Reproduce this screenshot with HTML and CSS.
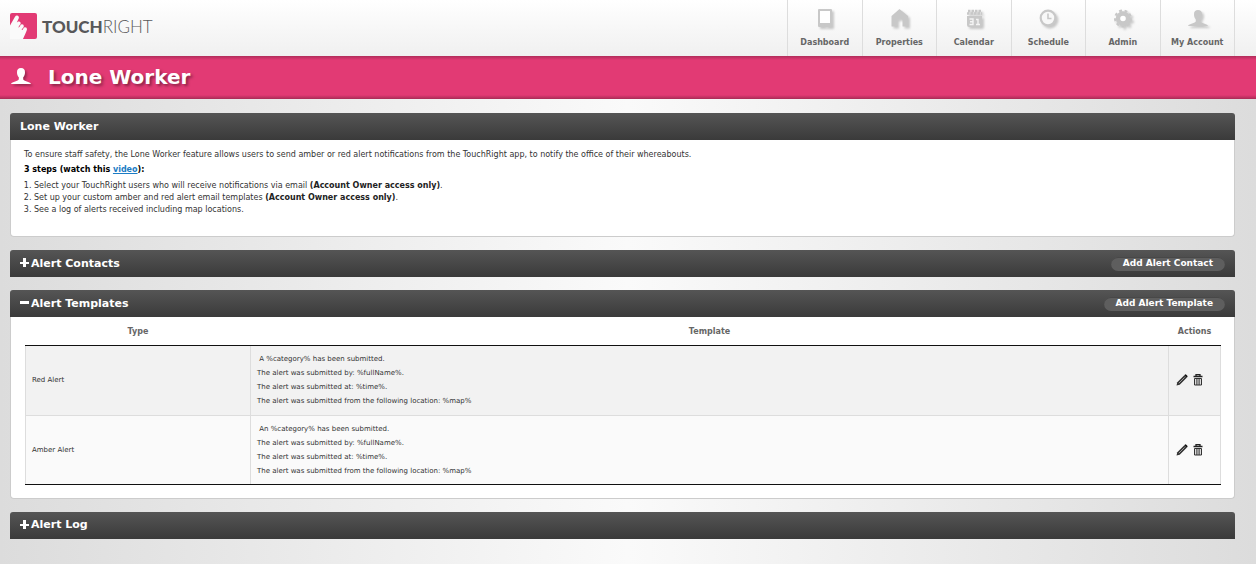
FILE: index.html
```html
<!DOCTYPE html>
<html lang="en">

<head>
    <meta charset="utf-8">
    <title>Lone Worker - TouchRight</title>
    <meta name="viewport" content="width=device-width, initial-scale=1">
    <link rel="stylesheet" href="styles.css">
</head>

<body>
    <!-- shared icons -->
    <svg class="sprite" aria-hidden="true">
        <symbol id="person" viewBox="0 0 20 17">
            <path d="M10 0C7.200 0 5.900 1.800 6 4.400C6 6.500 6.800 8.300 7.800 9.300V11.300C7.300 13.400 1.200 13.400 0 16H20C18.800 13.400 12.700 13.400 12.200 11.300V9.300C13.200 8.300 14 6.500 14 4.400C14.100 1.800 12.800 0 10 0Z" />
        </symbol>
        <symbol id="plus" viewBox="0 0 9 11">
            <path d="M3 0H6V4H9V6H6V9H3V6H0V4H3Z" />
        </symbol>
        <symbol id="pencil" viewBox="0 0 12 12">
            <path d="M0.500 11.500L1.300 8.300L8.300 1.300L10.700 3.700L3.700 10.700Z" fill="#333" />
            <path d="M8.800 0.800Q9.500 0 10.300 0.700L11.300 1.700Q12 2.500 11.200 3.200L10.700 3.700L8.300 1.300Z" fill="#111" />
            <path d="M2.800 9.200L8.600 3.400" stroke="#aaa" stroke-width="0.900" />
        </symbol>
        <symbol id="trash" viewBox="0 0 10 12">
            <path d="M3 2V0.700H7V2M0.500 2.500H9.500" fill="none" stroke="#222" stroke-width="1.300" />
            <path d="M1.500 4.500H8.500V11H1.500ZM3.900 4.500V11M6.100 4.500V11" fill="#ddd" stroke="#333" stroke-width="1" />
        </symbol>
    </svg>

    <header class="top">
        <a href="#" class="logo">
            <svg class="logo-mark" viewBox="0 0 27 26" aria-hidden="true">
                <rect width="27" height="26" rx="2" fill="#e23a74" />
                <path d="M0 12.500L5 3.800Q6.200 2 8 2.800Q9.500 3.700 8.700 5.600L6.800 9.600L8.300 8.500Q10.500 8 10.700 10L10.400 12L11.700 11.200Q13.800 11 13.800 13L13.500 15L14.700 14.300Q17 14 17 16.300Q17 17.300 13 26H0Z" fill="#fafafa" />
                <path d="M10.400 11.500L8.800 14.300M13.500 14.500L12 17" stroke="#e23a74" stroke-width="0.900" />
            </svg>
            <span class="logo-text"><b>TOUCH</b>RIGHT</span>
        </a>
        <nav class="menu">
            <a href="#">
                <svg viewBox="-1 0 20 20"><path fill-rule="evenodd" d="M3 0H15Q16 0 16 1V17Q16 18 15 18H3Q2 18 2 17V1Q2 0 3 0ZM4 2V14H14V2ZM8 15.500V16.500H10V15.500Z" /><path d="M4 2H14V14H4Z" fill="#fff" /></svg>
                Dashboard
            </a>
            <a href="#">
                <svg viewBox="-1 0 20 20"><path d="M9.500 0L18 7V17.500H12.500V11Q9.500 8 7 11V17.500H1.500V7Z" /></svg>
                Properties
            </a>
            <a href="#">
                <svg viewBox="-1 0 20 20">
                    <path d="M2 7H17V16Q17 18 15 18H4Q2 18 2 16Z" />
                    <path d="M2 4.500H17M3 2H16" stroke="#c8c8c8" stroke-width="2.400" stroke-dasharray="2.500 1" />
                    <path d="M4.500 10H8V15.500H4.500M5 12.700H8M11 10.500H13V15.500M11 15.500H15" stroke="#f4f4f4" stroke-width="1.400" fill="none" />
                </svg>
                Calendar
            </a>
            <a href="#">
                <svg viewBox="-1 0 20 20">
                    <circle cx="9" cy="9" r="7.300" fill="#f8f8f8" stroke="#c8c8c8" stroke-width="2.200" />
                    <path d="M9 4.500V9.500H12.500" fill="none" stroke="#c8c8c8" stroke-width="1.600" />
                </svg>
                Schedule
            </a>
            <a href="#">
                <svg viewBox="-1 0 20 20">
                    <circle cx="9" cy="9.500" r="5" fill="#fff" stroke="#c8c8c8" stroke-width="4.400" />
                    <circle cx="9" cy="9.500" r="7.900" fill="none" stroke="#c8c8c8" stroke-width="2.200" stroke-dasharray="2.910 2.600" />
                </svg>
                Admin
            </a>
            <a href="#">
                <svg viewBox="-1 0 20 20"><use href="#person" width="20" height="19" /></svg>
                My Account
            </a>
        </nav>
    </header>

    <div class="banner">
        <svg class="banner-icon" aria-hidden="true"><use href="#person" /></svg>
        <h1>Lone Worker</h1>
    </div>

    <main class="content">
        <section class="panel">
            <div class="panel-head">
                <h2>Lone Worker</h2>
            </div>
            <div class="panel-body intro">
                <p>To ensure staff safety, the Lone Worker feature allows users to send amber or red alert notifications from the TouchRight app, to notify the office of their whereabouts.</p>
                <h3>3 steps (watch this <a href="#">video</a>):</h3>
                <ol>
                    <li>Select your TouchRight users who will receive notifications via email <b>(Account Owner access only)</b>.</li>
                    <li>Set up your custom amber and red alert email templates <b>(Account Owner access only)</b>.</li>
                    <li>See a log of alerts received including map locations.</li>
                </ol>
            </div>
        </section>

        <section class="panel">
            <div class="panel-head">
                <svg class="toggle" aria-hidden="true"><use href="#plus" /></svg>
                <h2>Alert Contacts</h2>
                <button type="button" class="add">Add Alert Contact</button>
            </div>
        </section>

        <section class="panel">
            <div class="panel-head">
                <svg class="toggle" viewBox="0 0 9 11" aria-hidden="true"><path d="M0 3H9V6H0Z" /></svg>
                <h2>Alert Templates</h2>
                <button type="button" class="add">Add Alert Template</button>
            </div>
            <div class="panel-body">
                <table class="templates">
                    <thead>
                        <tr>
                            <th class="col-type">Type</th>
                            <th>Template</th>
                            <th class="col-actions">Actions</th>
                        </tr>
                    </thead>
                    <tbody>
                        <tr>
                            <td>Red Alert</td>
                            <td>
                                <p>&nbsp;A %category% has been submitted.</p>
                                <p>The alert was submitted by: %fullName%.</p>
                                <p>The alert was submitted at: %time%.</p>
                                <p>The alert was submitted from the following location: %map%</p>
                            </td>
                            <td>
                                <div class="actions">
                                    <button type="button" aria-label="Edit"><svg width="12" height="12"><use href="#pencil" /></svg></button>
                                    <button type="button" aria-label="Delete"><svg width="10" height="12"><use href="#trash" /></svg></button>
                                </div>
                            </td>
                        </tr>
                        <tr>
                            <td>Amber Alert</td>
                            <td>
                                <p>&nbsp;An %category% has been submitted.</p>
                                <p>The alert was submitted by: %fullName%.</p>
                                <p>The alert was submitted at: %time%.</p>
                                <p>The alert was submitted from the following location: %map%</p>
                            </td>
                            <td>
                                <div class="actions">
                                    <button type="button" aria-label="Edit"><svg width="12" height="12"><use href="#pencil" /></svg></button>
                                    <button type="button" aria-label="Delete"><svg width="10" height="12"><use href="#trash" /></svg></button>
                                </div>
                            </td>
                        </tr>
                    </tbody>
                </table>
            </div>
        </section>

        <section class="panel">
            <div class="panel-head">
                <svg class="toggle" aria-hidden="true"><use href="#plus" /></svg>
                <h2>Alert Log</h2>
            </div>
        </section>
    </main>
</body>

</html>
```

FILE: styles.css
```css
* {
    box-sizing: border-box;
}

html {
    min-height: 100%;
    background: linear-gradient(90deg, #dcdcdc, #fafafa 50%, #dcdcdc);
}

body {
    margin: 0;
    font-family: "DejaVu Sans", Verdana, sans-serif;
    font-size: 8px;
    color: #333;
}

h1, h2, h3, p, ol {
    margin: 0;
}

.sprite {
    display: none;
}

/* top bar */
.top {
    display: flex;
    justify-content: space-between;
    height: 56px;
    padding: 0 21px 0 10px;
    background: linear-gradient(#fff, #f0f0f0);
}

.logo {
    display: flex;
    align-items: center;
    gap: 5px;
    padding-bottom: 4px;
    color: #58585a;
    text-decoration: none;
}

.logo-mark {
    width: 27px;
    height: 26px;
}

.logo-text {
    font-family: Lato, sans-serif;
    font-size: 17px;
    font-weight: 300;
}

.logo-text b {
    font-weight: 900;
}

.menu {
    display: grid;
    grid-template-columns: repeat(6, 1fr);
    width: 448px;
    border-right: 1px solid #ddd;
}

.menu a {
    display: flex;
    flex-direction: column;
    align-items: center;
    gap: 7px;
    padding-top: 9px;
    border-left: 1px solid #ddd;
    font-size: 8px;
    font-weight: bold;
    line-height: 14px;
    color: #666;
    text-decoration: none;
}

.menu svg {
    width: 20px;
    height: 20px;
    fill: #c8c8c8;
    overflow: visible;
    filter: drop-shadow(2px 2px 1px rgba(0, 0, 0, .2));
}

/* page title */
.banner {
    display: flex;
    align-items: center;
    gap: 17px;
    height: 43px;
    padding: 0 11px 2px;
    background: linear-gradient(#b02d5a, #e23a74 4px, #e23a74 39px, #a82b56);
    color: #fff;
}

.banner-icon {
    width: 20px;
    height: 17px;
    fill: #fff;
    filter: drop-shadow(2px 2px 1px rgba(0, 0, 0, .3));
}

.banner h1 {
    font-size: 20px;
    line-height: 24px;
    text-shadow: 2px 2px 3px rgba(0, 0, 0, .4);
}

/* panels */
.content {
    display: flex;
    flex-direction: column;
    gap: 13px;
    padding: 14px 21px 25px 10px;
}

.panel-head {
    display: flex;
    align-items: center;
    gap: 2px;
    height: 27px;
    padding: 0 10px;
    border-radius: 3px 3px 0 0;
    background: linear-gradient(#555, #3a3a3a);
    color: #fff;
}

.panel-head h2 {
    font-size: 11px;
    line-height: 14px;
}

.toggle {
    width: 9px;
    height: 11px;
    fill: #fff;
}

.add {
    height: 14px;
    margin-left: auto;
    padding: 0 12px 2px;
    border: 0;
    border-radius: 7px;
    background: #5e5e5e;
    box-shadow: inset 0 1px 0 #484848;
    font: bold 9px/12px "DejaVu Sans", Verdana, sans-serif;
    color: #fff;
}

.panel-body {
    padding: 0 13px 13px 14px;
    border: 1px solid #ccc;
    border-top: 0;
    border-radius: 0 0 4px 4px;
    background: #fff;
}

.intro {
    padding: 9px 13px 20px;
    line-height: 12px;
}

.intro h3 {
    margin: 3px 0 4px;
    font-size: 8px;
    color: #000;
}

.intro a {
    color: #1c7cc4;
}

.intro ol {
    padding-left: 10px;
}

.intro b {
    color: #222;
}

/* templates table */
.templates {
    width: 100%;
    border-collapse: collapse;
    border-bottom: 1px solid #111;
    font-size: 7px;
}

.templates th {
    height: 28px;
    padding: 1px 0 0;
    border-bottom: 1px solid #111;
    font-size: 8px;
    color: #666;
}

.col-type {
    width: 225px;
}

.col-actions {
    width: 52px;
}

.templates td {
    padding: 6px 6px 7px;
    border: 1px solid #ddd;
    border-top-color: #111;
    background: #f2f2f2;
    line-height: 14px;
}

.templates tr + tr td {
    padding-bottom: 6px;
    border-top-color: #ddd;
    border-bottom-color: #111;
    background: #fafafa;
}

.actions {
    display: flex;
    gap: 5px;
    padding-left: 1px;
}

.actions button {
    display: flex;
    padding: 0;
    border: 0;
    background: none;
}
```
